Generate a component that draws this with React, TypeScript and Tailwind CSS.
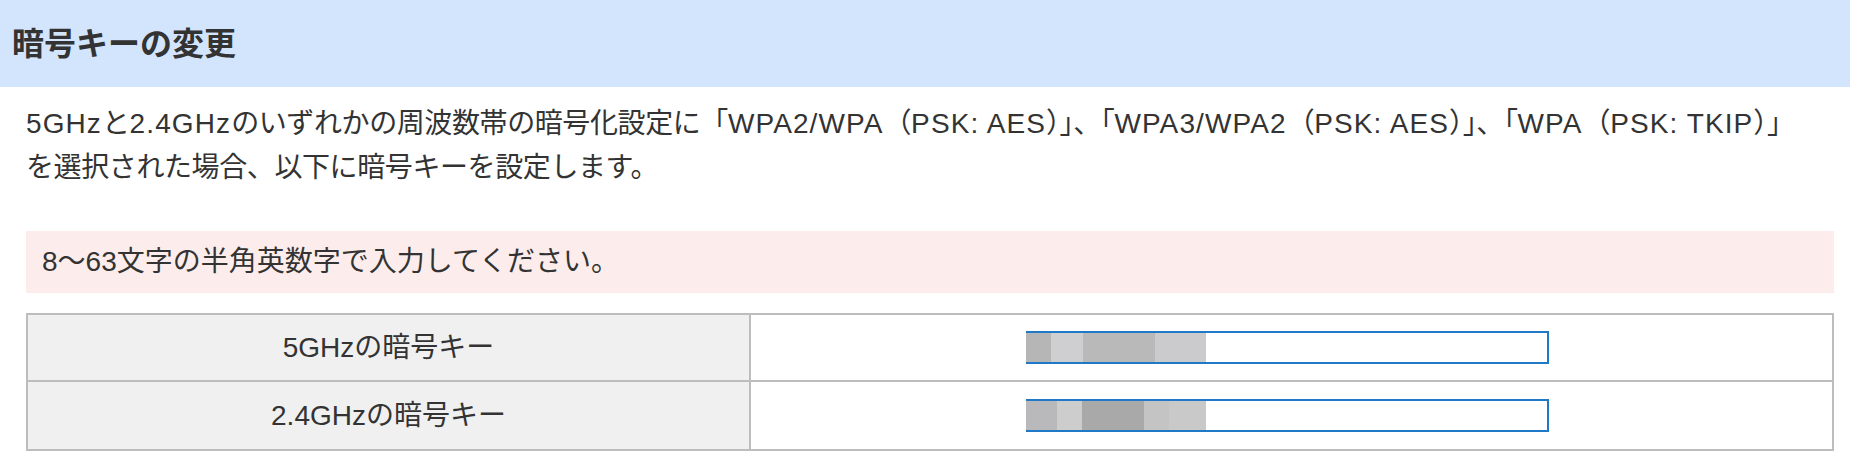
import React from "react";

const font = "font-['Liberation_Sans','Noto_Sans_CJK_JP',sans-serif]";

// latin runs sit a little wider in the original font
const L = ({ children }: { children: React.ReactNode }) => (
  <span className="tracking-[1.1px]">{children}</span>
);

// masked part of the key value (pixelated blocks over the field)
const MaskOne = () => (
  <div className="absolute left-[-2px] top-0 bottom-0 flex">
    <div className="w-[25px] bg-[#b6b6b7]" />
    <div className="w-[32px] bg-[#cfcfd1]" />
    <div className="w-[72px] bg-[#b9b9ba]" />
    <div className="w-[51px] bg-[#cbcbcd]" />
  </div>
);

const MaskTwo = () => (
  <div className="absolute left-[-2px] top-0 bottom-0 flex">
    <div className="w-[31px] bg-[#b9b9bb]" />
    <div className="w-[25px] bg-[#cdcdcd]" />
    <div className="w-[62px] bg-[#a9a9aa]" />
    <div className="w-[25px] bg-[#c4c4c4]" />
    <div className="w-[37px] bg-[#c9c9c9]" />
  </div>
);

const KeyRow = ({ label, mask, last }: { label: string; mask: React.ReactNode; last?: boolean }) => (
  <div className={`flex h-[67px] ${last ? "" : "border-b-2 border-[#bdbdbd]"}`}>
    <div className="w-[723px] shrink-0 bg-[#f0f0f0] border-r-2 border-[#bdbdbd] flex items-center justify-center text-[28px] text-[#333]">
      {label}
    </div>
    <div className="flex-1 flex items-center justify-center">
      <div className="relative w-[523px] h-[33px] mr-2 border-2 border-[#2079c7] bg-white">{mask}</div>
    </div>
  </div>
);

export default function App() {
  return (
    <div className={`w-[1850px] h-[466px] bg-white text-[#333] ${font}`}>
      <div className="h-[87px] bg-[#d2e5fd] flex items-center px-3">
        <h2 className="text-[32px] font-bold text-[#333]">暗号キーの変更</h2>
      </div>
      <div className="pl-[26px] pr-[16px]">
        <p className="mt-[15px] text-[28px] leading-[44px] tracking-[-0.4px] whitespace-nowrap">
          <L>5GHz</L>と<L>2.4GHz</L>のいずれかの周波数帯の暗号化設定に「<L>WPA2/WPA</L>（<L>PSK: AES</L>）」、「<L>WPA3/WPA2</L>（<L>PSK: AES</L>）」、「<L>WPA</L>（<L>PSK: TKIP</L>）」
          <br />
          を選択された場合、以下に暗号キーを設定します。
        </p>
        <div className="mt-[41px] h-[62px] bg-[#fcedec] flex items-center px-4 text-[28px]">
          8〜63文字の半角英数字で入力してください。
        </div>
        <div className="mt-[20px] border-2 border-[#bdbdbd]">
          <KeyRow label="5GHzの暗号キー" mask={<MaskOne />} />
          <KeyRow label="2.4GHzの暗号キー" mask={<MaskTwo />} last />
        </div>
      </div>
    </div>
  );
}
